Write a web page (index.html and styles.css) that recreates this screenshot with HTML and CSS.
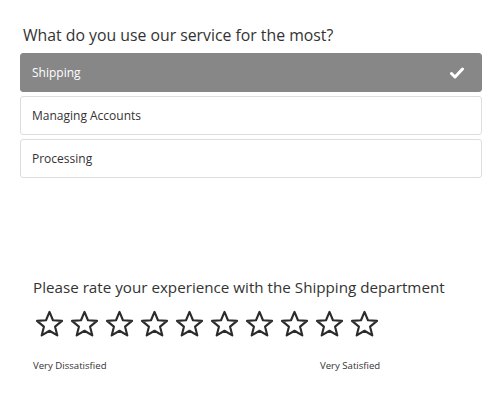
FILE: index.html
```html
<!DOCTYPE html>
<html lang="en">
<head>
    <meta charset="UTF-8">
    <meta name="viewport" content="width=device-width, initial-scale=1.0">
    <title>Survey</title>
    <link rel="stylesheet" href="styles.css">
</head>
<body>
    <div class="question">
        <h2 class="question-title">What do you use our service for the most?</h2>
        <ul class="options">
            <li class="option selected">
                <span>Shipping</span>
                <svg class="check" width="14" height="12" viewBox="0 0 14 12">
                    <path d="M1.5 6.5 L5 10 L12.5 2" fill="none" stroke="#fff" stroke-width="3" stroke-linecap="round" stroke-linejoin="round"/>
                </svg>
            </li>
            <li class="option"><span>Managing Accounts</span></li>
            <li class="option"><span>Processing</span></li>
        </ul>
    </div>

    <div class="rating">
        <h2 class="rating-title">Please rate your experience with the Shipping department</h2>
        <div class="stars">
            <svg class="star" viewBox="0 0 30 28"><polygon points="15,2 18.6,10.6 28,11.3 20.8,17.3 23.1,26.4 15,21.5 6.9,26.4 9.2,17.3 2,11.3 11.4,10.6"/></svg>
            <svg class="star" viewBox="0 0 30 28"><polygon points="15,2 18.6,10.6 28,11.3 20.8,17.3 23.1,26.4 15,21.5 6.9,26.4 9.2,17.3 2,11.3 11.4,10.6"/></svg>
            <svg class="star" viewBox="0 0 30 28"><polygon points="15,2 18.6,10.6 28,11.3 20.8,17.3 23.1,26.4 15,21.5 6.9,26.4 9.2,17.3 2,11.3 11.4,10.6"/></svg>
            <svg class="star" viewBox="0 0 30 28"><polygon points="15,2 18.6,10.6 28,11.3 20.8,17.3 23.1,26.4 15,21.5 6.9,26.4 9.2,17.3 2,11.3 11.4,10.6"/></svg>
            <svg class="star" viewBox="0 0 30 28"><polygon points="15,2 18.6,10.6 28,11.3 20.8,17.3 23.1,26.4 15,21.5 6.9,26.4 9.2,17.3 2,11.3 11.4,10.6"/></svg>
            <svg class="star" viewBox="0 0 30 28"><polygon points="15,2 18.6,10.6 28,11.3 20.8,17.3 23.1,26.4 15,21.5 6.9,26.4 9.2,17.3 2,11.3 11.4,10.6"/></svg>
            <svg class="star" viewBox="0 0 30 28"><polygon points="15,2 18.6,10.6 28,11.3 20.8,17.3 23.1,26.4 15,21.5 6.9,26.4 9.2,17.3 2,11.3 11.4,10.6"/></svg>
            <svg class="star" viewBox="0 0 30 28"><polygon points="15,2 18.6,10.6 28,11.3 20.8,17.3 23.1,26.4 15,21.5 6.9,26.4 9.2,17.3 2,11.3 11.4,10.6"/></svg>
            <svg class="star" viewBox="0 0 30 28"><polygon points="15,2 18.6,10.6 28,11.3 20.8,17.3 23.1,26.4 15,21.5 6.9,26.4 9.2,17.3 2,11.3 11.4,10.6"/></svg>
            <svg class="star" viewBox="0 0 30 28"><polygon points="15,2 18.6,10.6 28,11.3 20.8,17.3 23.1,26.4 15,21.5 6.9,26.4 9.2,17.3 2,11.3 11.4,10.6"/></svg>
        </div>
        <div class="labels">
            <span class="label-low">Very Dissatisfied</span>
            <span class="label-high">Very Satisfied</span>
        </div>
    </div>
</body>
</html>
```

FILE: styles.css
```css
body {
    margin: 0;
    font-family: "Open Sans", Arial, sans-serif;
    color: #333;
    background-color: #fff;
}

.question {
    padding: 24px 21px 0 20px;
}

.question-title {
    margin: 0 0 7px 3px;
    font-size: 15.8px;
    font-weight: normal;
    line-height: 22px;
}

.options {
    list-style: none;
    margin: 0;
    padding: 0;
    display: flex;
    flex-direction: column;
    gap: 4px;
}

.option {
    display: flex;
    align-items: center;
    justify-content: space-between;
    height: 37px;
    padding: 0 17px 0 11px;
    border: 1px solid #ddd;
    border-radius: 3px;
    font-size: 12px;
}

.option.selected {
    background-color: #878787;
    border-color: #878787;
    color: #fff;
}

.check {
    display: block;
}

.rating {
    padding: 98px 0 0 33px;
}

.rating-title {
    margin: 0 0 12px 0;
    font-size: 15.2px;
    font-weight: normal;
    line-height: 22px;
}

.stars {
    display: flex;
    gap: 6px;
    margin-left: 2px;
}

.star {
    width: 29px;
    height: 27px;
    display: block;
}

.star polygon {
    fill: none;
    stroke: #2b2b2b;
    stroke-width: 2.2;
    stroke-linejoin: round;
}

.labels {
    display: flex;
    margin-top: 22px;
    font-size: 9.6px;
    line-height: 14px;
}

.label-low {
    width: 287px;
}
```
